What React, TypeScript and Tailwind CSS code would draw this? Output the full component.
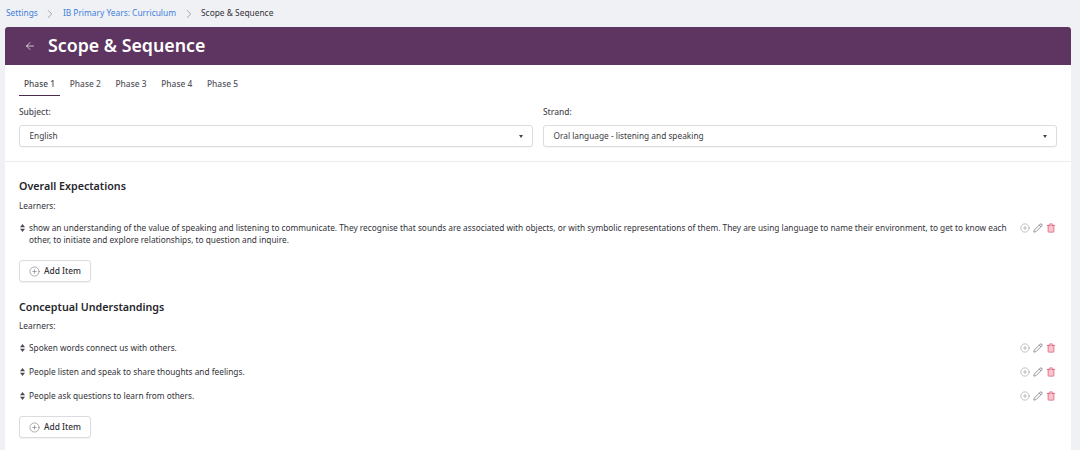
import React from "react";
import { ChevronRight, CirclePlus, Pencil, Trash2, ArrowLeft } from "lucide-react";

const phases = ["Phase 1", "Phase 2", "Phase 3", "Phase 4", "Phase 5"];

const SortHandle = () => (
  <svg width="5" height="8" viewBox="0 0 5 8" className="shrink-0 ml-[0.5px] fill-[#4a4a52]">
    <path d="M2.5 0 L5 3.2 H0 Z" />
    <path d="M2.5 8 L0 4.8 H5 Z" />
  </svg>
);

const RowActions = () => (
  <div className="flex items-center shrink-0">
    <CirclePlus className="w-[10px] h-[10px] text-[#8d8d94]" strokeWidth={1.25} />
    <Pencil className="w-[10px] h-[10px] ml-[3px] text-[#6f6f76]" strokeWidth={1.75} />
    <Trash2 className="w-[10px] h-[10px] ml-[3px] mr-[1px] text-[#e0566f] fill-[#f7c5cf]" strokeWidth={1.75} />
  </div>
);

const Item = ({ children }: { children: React.ReactNode }) => (
  <div className="flex items-start">
    <div className="h-[12px] flex items-center w-[10px] shrink-0">
      <SortHandle />
    </div>
    <p className="flex-1 text-[8.3px] leading-[12px] text-[#33333a] pr-[11px]">{children}</p>
    <div className="h-[12px] pb-[1px] flex items-center">
      <RowActions />
    </div>
  </div>
);

const AddItem = () => (
  <button className="flex items-center justify-center gap-[4px] w-[72px] h-[22px] bg-white border border-[#dcdce0] rounded-[3px] shadow-[0_1px_1px_rgba(0,0,0,0.05)] text-[8.4px] font-medium text-[#33333a]">
    <CirclePlus className="w-[11px] h-[11px] text-[#5f5f66]" strokeWidth={1.1} />
    Add Item
  </button>
);

const Select = ({ label, value }: { label: string; value: string }) => (
  <div className="flex-1">
    <div className="text-[8.4px] leading-[12px] font-medium text-[#4b4b52] mb-[7px]">{label}</div>
    <div className="h-[22px] flex items-center justify-between pl-[9.5px] pr-[9px] bg-white border border-[#dcdce0] rounded-[3px] shadow-[0_1px_1px_rgba(0,0,0,0.04)]">
      <span className="text-[8.3px] text-[#3b3b42]">{value}</span>
      <span className="w-0 h-0 border-x-[2.5px] border-x-transparent border-t-[3px] border-t-[#44444b]" />
    </div>
  </div>
);

export default function App() {
  return (
    <div className="h-[450px] overflow-hidden bg-[#f0f1f5] font-['Noto_Sans',sans-serif]">
      {/* Breadcrumb */}
      <div className="h-[27px] pl-[6px] flex items-center text-[8.4px]">
        <a className="text-[#3f7fdc]">Settings</a>
        <ChevronRight className="w-[14px] h-[14px] mx-[5.5px] text-[#77777e]" strokeWidth={1.1} />
        <a className="text-[#3f7fdc]">IB Primary Years: Curriculum</a>
        <ChevronRight className="w-[14px] h-[14px] mx-[5.5px] text-[#77777e]" strokeWidth={1.1} />
        <span className="text-[#33333a]">Scope &amp; Sequence</span>
      </div>

      <div className="ml-[5px] w-[1066px] h-[423px] bg-white">
        {/* Title bar */}
        <div className="h-[38px] pb-[1px] bg-[#5e3560] rounded-t-[3px] flex items-center pl-[19px]">
          <ArrowLeft className="w-[12px] h-[12px] text-white" strokeWidth={1.4} />
          <h1 className="ml-[12px] text-[17.8px] font-semibold text-white">Scope &amp; Sequence</h1>
        </div>

        {/* Phase tabs */}
        <div className="px-[14px] pt-[9px] flex">
          {phases.map((phase, i) => (
            <div
              key={phase}
              className={`h-[22px] w-[41px] flex items-center justify-center mr-[4.75px] text-[8.4px] font-medium border-b ${
                i === 0 ? "border-[#4b2a4d] text-[#4b4b52]" : "border-transparent text-[#55555c]"
              }`}
            >
              {phase}
            </div>
          ))}
        </div>

        {/* Subject and strand filters */}
        <div className="px-[14px] pt-[10px] pb-[14px] flex gap-[10px] border-b border-[#ececef]">
          <Select label="Subject:" value="English" />
          <Select label="Strand:" value="Oral language - listening and speaking" />
        </div>

        <div className="px-[14px] pt-[17px]">
          <h2 className="text-[10.7px] leading-[14px] font-semibold text-[#26262c]">Overall Expectations</h2>
          <div className="mt-[7px] text-[8.3px] leading-[12px] text-[#33333a]">Learners:</div>
          <div className="mt-[10px]">
            <Item>
              show an understanding of the value of speaking and listening to communicate. They recognise that sounds are associated with objects, or with symbolic representations of them. They are using language to name their environment, to get to know each other, to initiate and explore relationships, to question and inquire.
            </Item>
          </div>
          <div className="mt-[14px]">
            <AddItem />
          </div>

          <h2 className="mt-[18px] text-[10.7px] leading-[14px] font-semibold text-[#26262c]">Conceptual Understandings</h2>
          <div className="mt-[6px] text-[8.3px] leading-[12px] text-[#33333a]">Learners:</div>
          <div className="mt-[10px] flex flex-col gap-[12px]">
            <Item>Spoken words connect us with others.</Item>
            <Item>People listen and speak to share thoughts and feelings.</Item>
            <Item>People ask questions to learn from others.</Item>
          </div>
          <div className="mt-[14px]">
            <AddItem />
          </div>
        </div>
      </div>
    </div>
  );
}
